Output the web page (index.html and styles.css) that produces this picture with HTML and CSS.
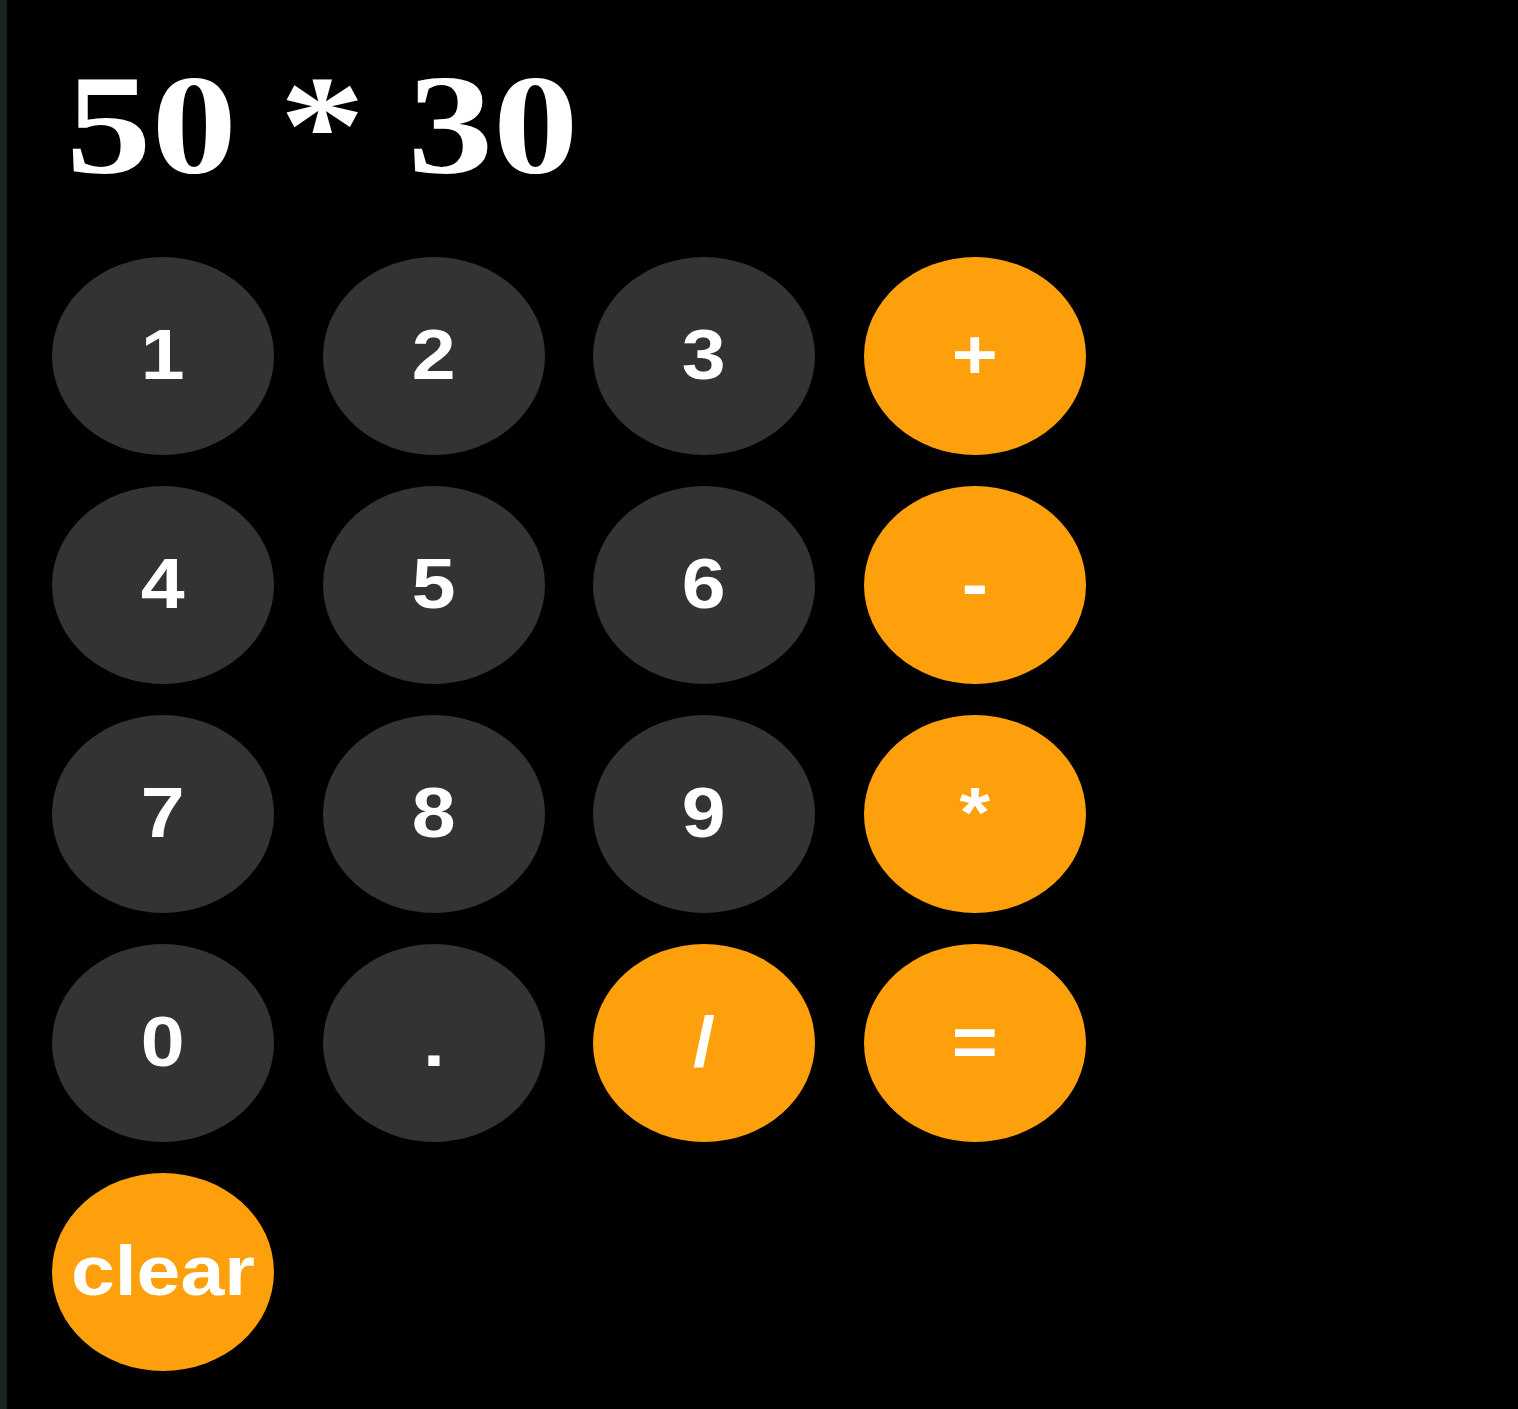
FILE: index.html
```html
<!DOCTYPE html>
<html>
<head>
<meta charset="utf-8">
<link rel="stylesheet" href="styles.css">
</head>
<body>
<div class="edge"></div>
<main class="calc">
  <div class="display"><span class="display-text">50 * 30</span></div>
  <div class="keys">
    <button class="key num"><span class="label">1</span></button>
    <button class="key num"><span class="label">2</span></button>
    <button class="key num"><span class="label">3</span></button>
    <button class="key op"><span class="label">+</span></button>
    <button class="key num"><span class="label">4</span></button>
    <button class="key num"><span class="label">5</span></button>
    <button class="key num"><span class="label">6</span></button>
    <button class="key op"><span class="label">-</span></button>
    <button class="key num"><span class="label">7</span></button>
    <button class="key num"><span class="label">8</span></button>
    <button class="key num"><span class="label">9</span></button>
    <button class="key op"><span class="label">*</span></button>
    <button class="key num"><span class="label">0</span></button>
    <button class="key num"><span class="label">.</span></button>
    <button class="key op"><span class="label">/</span></button>
    <button class="key op"><span class="label">=</span></button>
    <button class="key op clear"><span class="label">clear</span></button>
  </div>
</main>
</body>
</html>
```
FILE: styles.css
```css
html, body {
  margin: 0;
  height: 100%;
  background: #000;
}
body {
  display: flex;
}
.edge {
  width: 7px;
  flex: none;
  background: #17231f;
}
.calc {
  flex: 1;
  padding: 54px 0 0 45px;
}
.display {
  font-family: "Liberation Serif", "Times New Roman", serif;
  font-weight: bold;
  font-size: 142px;
  line-height: 1;
  color: #fff;
  padding-left: 14px;
  height: 142px;
  white-space: nowrap;
}
.display-text {
  display: inline-block;
  transform: scaleX(1.203);
  transform-origin: left center;
}
.keys {
  margin-top: 61px;
  display: grid;
  grid-template-columns: repeat(4, 222px);
  grid-auto-rows: 198px;
  column-gap: 48.5px;
  row-gap: 31px;
}
.key {
  border: none;
  border-radius: 50%;
  padding: 0;
  margin: 0;
  color: #fff;
  font-family: "Liberation Sans", Arial, sans-serif;
  font-weight: bold;
  font-size: 71px;
  display: flex;
  align-items: center;
  justify-content: center;
  white-space: nowrap;
}
.label {
  display: inline-block;
  transform: translateY(-2px) scaleX(1.11);
}
.num {
  background: #333333;
}
.op {
  background: #fea00c;
}
```
